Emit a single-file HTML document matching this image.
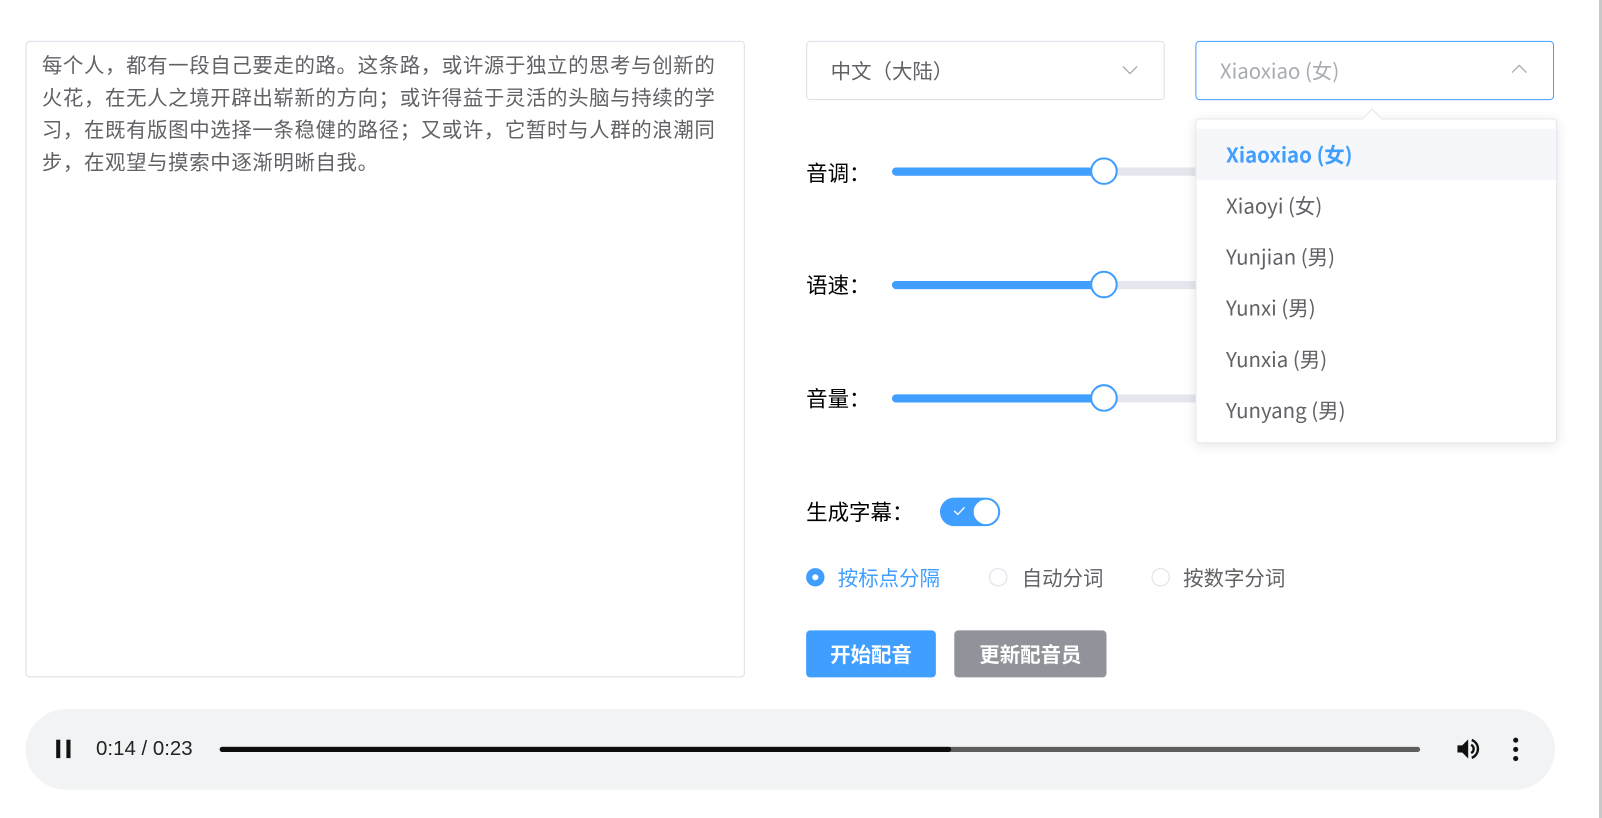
<!DOCTYPE html>
<html><head><meta charset="utf-8"><style>
*{box-sizing:border-box;margin:0;padding:0}
body{width:1602px;height:818px;background:#fff;font-family:"Liberation Sans","Noto Sans CJK SC",sans-serif;position:relative;overflow:hidden}
#w{position:absolute;left:0;top:0;width:1568px;height:801px;transform:scale(1.0217);transform-origin:0 0}
.abs{position:absolute}
.ta{left:25px;top:40px;width:704px;height:623px;border:1px solid #dcdfe6;border-radius:4px;padding:6px 15px;font-size:20px;letter-spacing:0.6px;line-height:31.5px;color:#606266;font-family:"Noto Sans CJK SC",sans-serif}
.sel{top:40px;width:351px;height:58px;border:1px solid #dcdfe6;border-radius:4px;font-size:20px;line-height:56px;padding-left:23px;color:#606266;font-family:"Noto Sans CJK SC",sans-serif}
.lbl{left:789px;font-size:21px;color:#000;font-family:"Noto Sans CJK SC",sans-serif;line-height:24px}
.track{left:873px;width:320px;height:8px;border-radius:4px;background:#e4e7ed}
.fill{left:873px;width:207px;height:8px;border-radius:4px;background:#409eff}
.knob{width:27px;height:27px;border:2px solid #409eff;border-radius:50%;background:#fff;left:1067px}
.dd{left:1170px;top:116px;width:354px;height:318px;border:1px solid #e4e7ed;border-radius:4px;background:#fff;box-shadow:0 2px 12px rgba(0,0,0,.1);font-family:"Noto Sans CJK SC",sans-serif}
.it{position:absolute;left:0;width:352px;height:50px;line-height:50px;padding-left:29px;font-size:20px;color:#606266}
.rad{width:18px;height:18px;border:1px solid #dcdfe6;border-radius:50%;background:#fff}
.rt{font-size:20px;color:#606266;font-family:"Noto Sans CJK SC",sans-serif;line-height:24px}
.btn{top:617px;height:46px;border-radius:4px;color:#fff;font-size:20px;font-weight:bold;text-align:center;line-height:46px;font-family:"Noto Sans CJK SC",sans-serif}
</style></head><body>
<div id="w">
<div class="abs" style="left:1565px;top:0;width:3px;height:801px;background:#c8c8c8"></div>
<div class="abs ta">每个人，都有一段自己要走的路。这条路，或许源于独立的思考与创新的火花，在无人之境开辟出崭新的方向；或许得益于灵活的头脑与持续的学习，在既有版图中选择一条稳健的路径；又或许，它暂时与人群的浪潮同步，在观望与摸索中逐渐明晰自我。</div>

<div class="abs sel" style="left:789px">中文（大陆）</div>
<svg class="abs" style="left:1098px;top:62px" width="16" height="12"><path d="M1 3 L8 10 L15 3" fill="none" stroke="#a8abb2" stroke-width="1.3"/></svg>
<div class="abs sel" style="left:1170px;border-color:#409eff;color:#a8abb2">Xiaoxiao (女)</div>
<svg class="abs" style="left:1479px;top:62px" width="16" height="12"><path d="M1 9 L8 2 L15 9" fill="none" stroke="#a8abb2" stroke-width="1.3"/></svg>

<div class="abs lbl" style="top:157px">音调：</div>
<div class="abs track" style="top:164px"></div><div class="abs fill" style="top:164px"></div><div class="abs knob" style="top:154px"></div>
<div class="abs lbl" style="top:267px">语速：</div>
<div class="abs track" style="top:275px"></div><div class="abs fill" style="top:275px"></div><div class="abs knob" style="top:265px"></div>
<div class="abs lbl" style="top:378px">音量：</div>
<div class="abs track" style="top:386px"></div><div class="abs fill" style="top:386px"></div><div class="abs knob" style="top:376px"></div>

<div class="abs" style="left:1336px;top:109px;width:14px;height:14px;background:#fff;border-left:1px solid #e4e7ed;border-top:1px solid #e4e7ed;transform:rotate(45deg);z-index:2"></div>
<div class="abs dd">
<div class="it" style="top:9px;background:#f5f7fa;color:#409eff;font-weight:bold">Xiaoxiao (女)</div>
<div class="it" style="top:59px">Xiaoyi (女)</div>
<div class="it" style="top:109px">Yunjian (男)</div>
<div class="it" style="top:159px">Yunxi (男)</div>
<div class="it" style="top:209px">Yunxia (男)</div>
<div class="it" style="top:259px">Yunyang (男)</div>
</div>

<div class="abs lbl" style="top:489px">生成字幕：</div>
<div class="abs" style="left:920px;top:487px;width:59px;height:28px;border-radius:14px;background:#409eff"></div>
<div class="abs" style="left:953px;top:489px;width:24px;height:24px;border-radius:50%;background:#fff"></div>
<svg class="abs" style="left:932px;top:494px" width="14" height="12"><path d="M2 6 L5.5 9.5 L12 2.5" fill="none" stroke="#fff" stroke-width="1.3"/></svg>

<div class="abs rad" style="left:789px;top:556px;border:6px solid #409eff"></div>
<div class="abs rt" style="left:820px;top:553px;color:#409eff">按标点分隔</div>
<div class="abs rad" style="left:968px;top:556px"></div>
<div class="abs rt" style="left:1000px;top:553px">自动分词</div>
<div class="abs rad" style="left:1127px;top:556px"></div>
<div class="abs rt" style="left:1158px;top:553px">按数字分词</div>

<div class="abs btn" style="left:789px;width:127px;background:#409eff">开始配音</div>
<div class="abs btn" style="left:934px;width:149px;background:#909399">更新配音员</div>

<div class="abs" style="left:25px;top:694px;width:1497px;height:79px;border-radius:40px;background:#f1f3f4"></div>
<div class="abs" style="left:55px;top:724px;width:4px;height:18px;background:#111"></div>
<div class="abs" style="left:65px;top:724px;width:4px;height:18px;background:#111"></div>
<div class="abs" style="left:94px;top:721px;font-size:20px;color:#222;line-height:24px">0:14 / 0:23</div>
<div class="abs" style="left:215px;top:731px;width:1175px;height:5px;border-radius:3px;background:#5e5e5e"></div>
<div class="abs" style="left:215px;top:731px;width:716px;height:5px;border-radius:3px;background:#0d0d0d"></div>
<svg class="abs" style="left:1423px;top:719px" width="28" height="28" viewBox="0 0 24 24"><path d="M3 9v6h4l5 5V4L7 9H3z" fill="#111"/><path d="M14.5 8.5a4 4 0 0 1 0 7" fill="none" stroke="#111" stroke-width="2"/><path d="M15 4.5a8 8 0 0 1 0 15" fill="none" stroke="#111" stroke-width="2"/></svg>
<div class="abs" style="left:1481px;top:722px;width:5px;height:5px;border-radius:50%;background:#111"></div>
<div class="abs" style="left:1481px;top:731px;width:5px;height:5px;border-radius:50%;background:#111"></div>
<div class="abs" style="left:1481px;top:740px;width:5px;height:5px;border-radius:50%;background:#111"></div>
</div>
</body></html>
